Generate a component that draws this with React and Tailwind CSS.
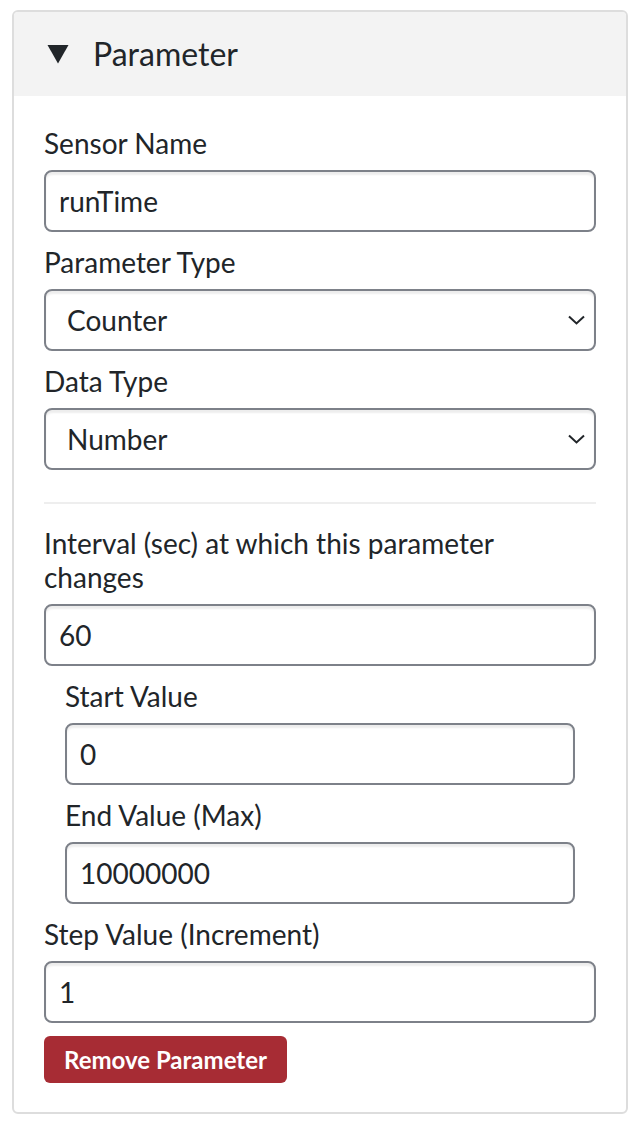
import React from "react";

function Label({ children, className = "" }) {
  return (
    <label className={"block text-[28px] leading-[34px] text-[#212529] mb-[10px] " + className}>
      {children}
    </label>
  );
}

function TextInput({ value }) {
  return (
    <div className="h-[62px] rounded-[8px] border-2 border-[#7d8189] bg-white shadow-[inset_0_3px_2px_rgba(0,0,0,0.07)] flex items-center px-[13px] text-[28px] text-[#212529]">
      {value}
    </div>
  );
}

function Select({ value }) {
  return (
    <div className="h-[62px] rounded-[8px] border-2 border-[#7d8189] bg-white shadow-[inset_0_3px_2px_rgba(0,0,0,0.07)] flex items-center justify-between pl-[21px] pr-[9px] text-[28px] text-[#212529]">
      <span>{value}</span>
      <svg width="17" height="10" viewBox="0 0 17 10" fill="none">
        <path d="M1 1.5L8.5 8.5L16 1.5" stroke="#212529" strokeWidth="2" />
      </svg>
    </div>
  );
}

export default function App() {
  return (
    <div className="min-h-[1126px] bg-white pt-[10px] pl-[12px] pr-[10px]" style={{ fontFamily: "Lato, 'Noto Sans', sans-serif" }}>
      <div className="border-2 border-[#dddddd] rounded-[6px] overflow-hidden">
        <div className="h-[84px] bg-[#f3f3f3] flex items-center pl-[33px] text-[32px] text-[#212529]">
          <svg width="22" height="20" viewBox="0 0 22 20" className="mr-[24px]">
            <path d="M0.5 1H21.5L11 19.5Z" fill="#212529" />
          </svg>
          <span>Parameter</span>
        </div>
        <div className="px-[30px] pt-[30px] pb-[29px]">
          <div className="mb-[13px]">
            <Label>Sensor Name</Label>
            <TextInput value="runTime" />
          </div>
          <div className="mb-[13px]">
            <Label>Parameter Type</Label>
            <Select value="Counter" />
          </div>
          <div>
            <Label>Data Type</Label>
            <Select value="Number" />
          </div>
          <hr className="mt-[32px] mb-[22px] border-t-2 border-[#eeeeee]" />
          <div className="mb-[13px]">
            <Label>Interval (sec) at which this parameter changes</Label>
            <TextInput value="60" />
          </div>
          <div className="pl-[21px] pr-[21px]">
            <div className="mb-[13px]">
              <Label>Start Value</Label>
              <TextInput value="0" />
            </div>
            <div className="mb-[13px]">
              <Label>End Value (Max)</Label>
              <TextInput value="10000000" />
            </div>
          </div>
          <div className="mb-[13px]">
            <Label>Step Value (Increment)</Label>
            <TextInput value="1" />
          </div>
          <button className="h-[47px] px-[20px] rounded-[6px] bg-[#a72c34] text-white font-bold text-[24px] leading-none">
            Remove Parameter
          </button>
        </div>
      </div>
    </div>
  );
}
